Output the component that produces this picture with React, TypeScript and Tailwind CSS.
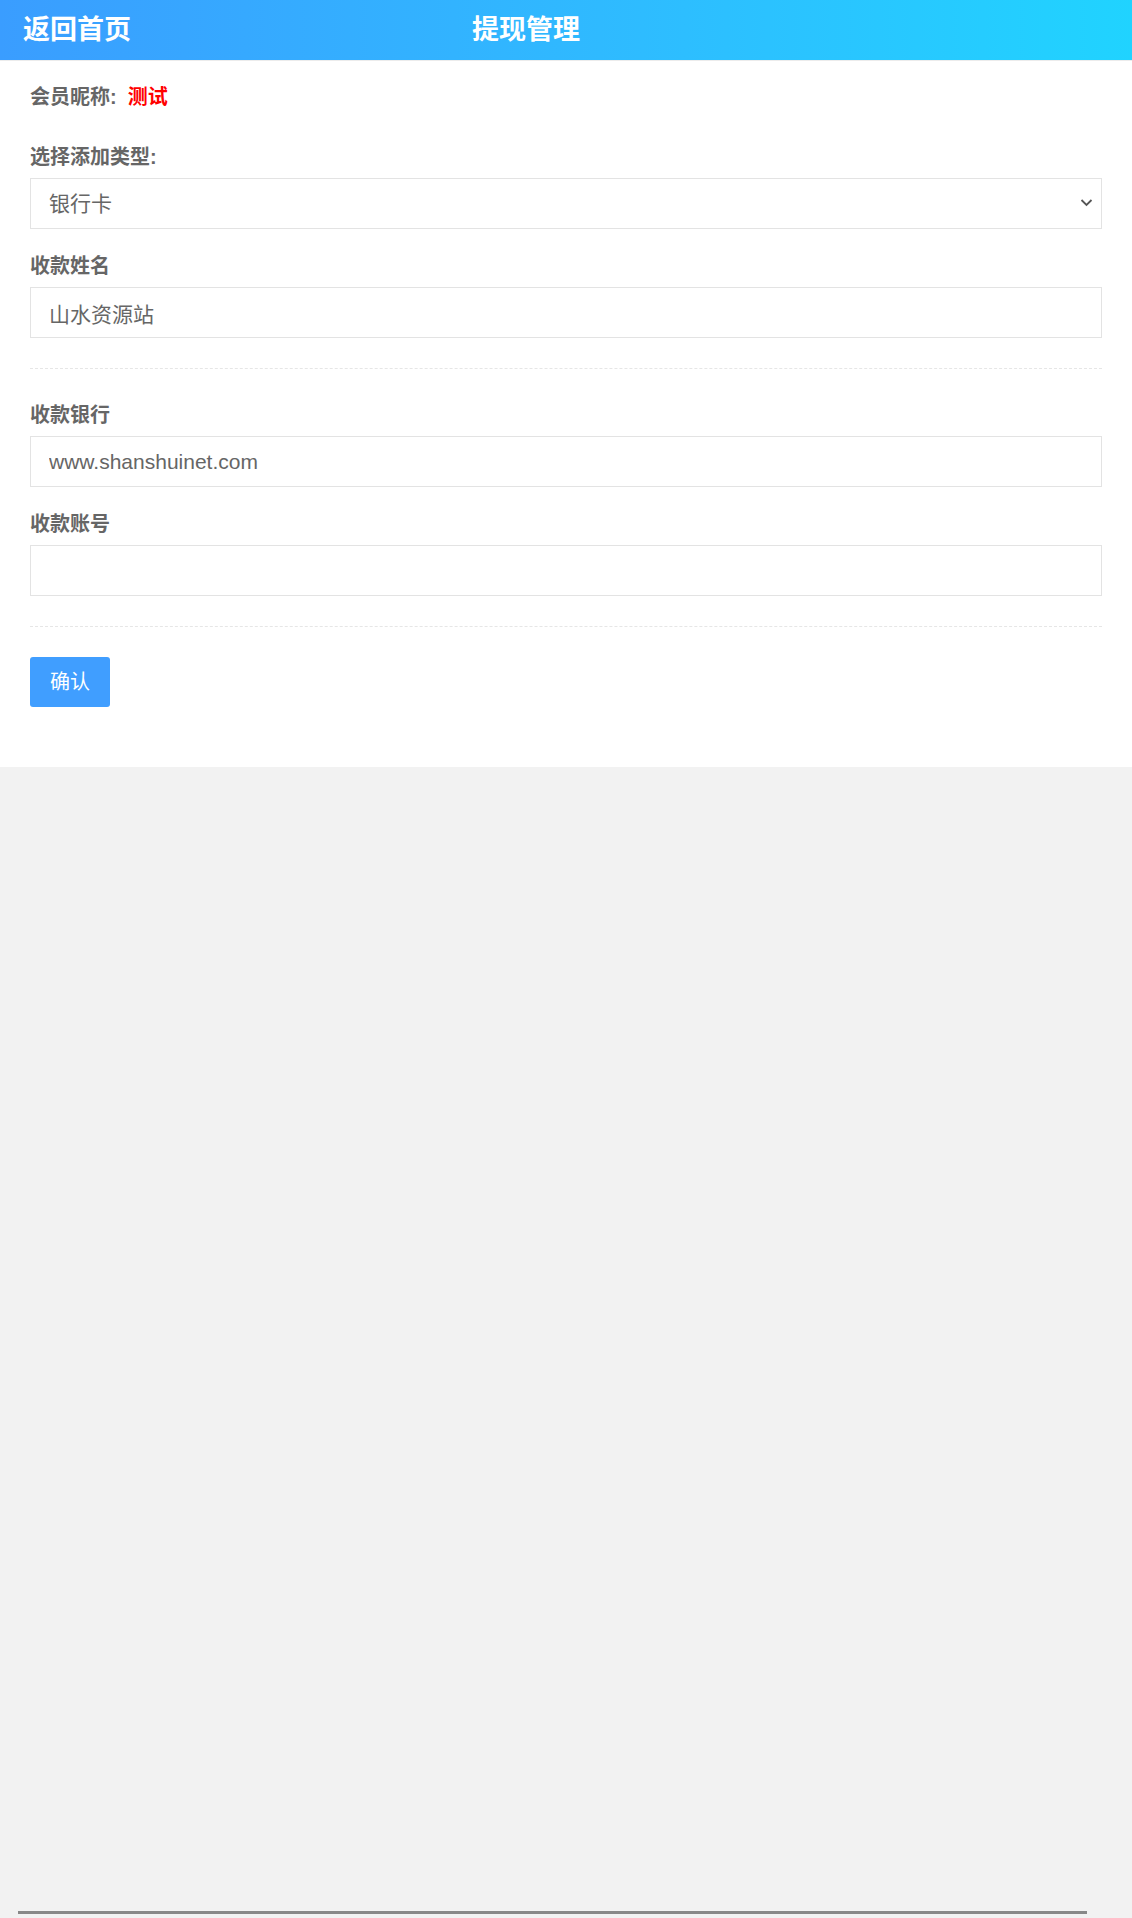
import React from 'react'

const font = { fontFamily: '"Liberation Sans", "Noto Sans CJK SC", sans-serif' }

function Label({ children }: { children: React.ReactNode }) {
  return <div className="h-[30px] text-[20px] leading-[30px] font-bold text-[#666]">{children}</div>
}

function Field({ label, value }: { label: string; value: string }) {
  return (
    <div className="mt-[22px] first:mt-0">
      <Label>{label}</Label>
      <input
        readOnly
        value={value}
        className="mt-[6px] block h-[51px] w-full border border-[#e3e3e3] bg-white px-[18px] text-[21px] text-[#666] outline-none"
      />
    </div>
  )
}

export default function App() {
  return (
    <div className="flex min-h-[1918px] flex-col bg-[#f2f2f2]" style={font}>
      <header className="flex h-[61px] items-center border-b border-[#ececec] bg-gradient-to-r from-[#3a9dff] to-[#20d3ff] px-[23px] text-[27px] font-bold text-white">
        <span>返回首页</span>
        <span className="ml-[341px]">提现管理</span>
      </header>

      <main className="bg-white px-[30px] pb-[60px] pt-[21px]">
        <div className="h-[30px] text-[20px] leading-[30px] font-bold text-[#666]">
          会员昵称:<span className="ml-[11px] text-[#ff0000]">测试</span>
        </div>

        <div className="mt-[30px]">
          <Label>选择添加类型:</Label>
          <div className="relative mt-[6px]">
            <select
              defaultValue="bank"
              className="block h-[51px] w-full appearance-none border border-[#e3e3e3] bg-white px-[18px] text-[21px] text-[#666] outline-none"
            >
              <option value="bank">银行卡</option>
              <option value="alipay">支付宝</option>
            </select>
            <svg
              className="pointer-events-none absolute right-[9px] top-[20px] h-[9px] w-[13px]"
              viewBox="0 0 13 9"
              fill="none"
              stroke="#555"
              strokeWidth="1.8"
            >
              <path d="M1.5 2l5 5 5-5" />
            </svg>
          </div>
        </div>

        <Field label="收款姓名" value="山水资源站" />

        <div className="mb-[31px] mt-[30px] border-t border-dashed border-[#e6e6e6]" />

        <Field label="收款银行" value="www.shanshuinet.com" />
        <Field label="收款账号" value="" />

        <div className="my-[30px] border-t border-dashed border-[#e6e6e6]" />

        <button className="h-[50px] w-[80px] rounded-[3px] bg-[#409eff] text-[20px] text-white">确认</button>
      </main>

      <div className="flex flex-1 flex-col justify-end pb-[4px]">
        <div className="mx-[18px] h-[3px] w-[1069px] bg-[#888]" />
      </div>
    </div>
  )
}
